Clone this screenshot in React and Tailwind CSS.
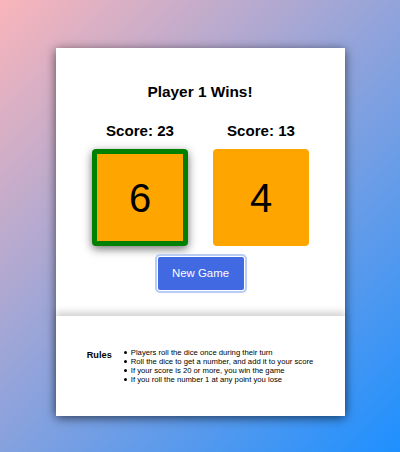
export default function App() {
  const rules = [
    "Players roll the dice once during their turn",
    "Roll the dice to get a number, and add it to your score",
    "If your score is 20 or more, you win the game",
    "If you roll the number 1 at any point you lose",
  ];
  return (
    <div
      className="w-full h-[452px] flex justify-center items-start bg-[linear-gradient(135deg,#fab5ba_0%,#1e90ff_100%)]"
      style={{ fontFamily: '"Liberation Sans", Arial, sans-serif' }}
    >
      <div className="mt-[48px] w-[289px] h-[368px] bg-white flex flex-col shadow-[0_2px_10px_rgba(0,0,0,0.6)]">
        <div className="h-[268px] flex flex-col items-center pt-[35px]">
          <h1 className="text-[15.4px] leading-[18px] font-bold text-black">Player 1 Wins!</h1>
          <div className="mt-[21px] flex gap-[25px] ml-[1px]">
            <div className="w-[96px] flex flex-col items-center">
              <div className="text-[15.1px] leading-[18px] font-bold text-black">Score: 23</div>
              <div className="mt-[9px] w-[96px] h-[97px] rounded-[4px] bg-[#ffa500] border-[5px] border-[#008000] flex items-center justify-center text-[40px] text-black shadow-[0_3px_10px_rgba(0,0,0,0.55)]">
                6
              </div>
            </div>
            <div className="w-[96px] flex flex-col items-center">
              <div className="text-[15.1px] leading-[18px] font-bold text-black">Score: 13</div>
              <div className="mt-[9px] w-[96px] h-[97px] rounded-[4px] bg-[#ffa500] flex items-center justify-center text-[40px] text-black">
                4
              </div>
            </div>
          </div>
          <button className="mt-[11px] ml-[1px] w-[86px] h-[33px] rounded-[2px] bg-[#4169e1] text-white text-[11.4px] ring-2 ring-[#b8ccf5] ring-offset-[1px] ring-offset-white">
            New Game
          </button>
        </div>
        <div className="relative flex-1 flex justify-center gap-[12px] shadow-[0_-4px_7px_rgba(0,0,0,0.18)] bg-white">
          <div className="text-[9.2px] font-bold text-black leading-[9px] pt-[35px]">Rules</div>
          <ul className="text-[7.7px] leading-[9px] text-black pt-[32px]">
            {rules.map((r) => (
              <li key={r} className="flex items-center">
                <span className="w-[3px] h-[3px] rounded-full bg-black mr-[4px] shrink-0"></span>
                <span>{r}</span>
              </li>
            ))}
          </ul>
        </div>
      </div>
    </div>
  );
}
